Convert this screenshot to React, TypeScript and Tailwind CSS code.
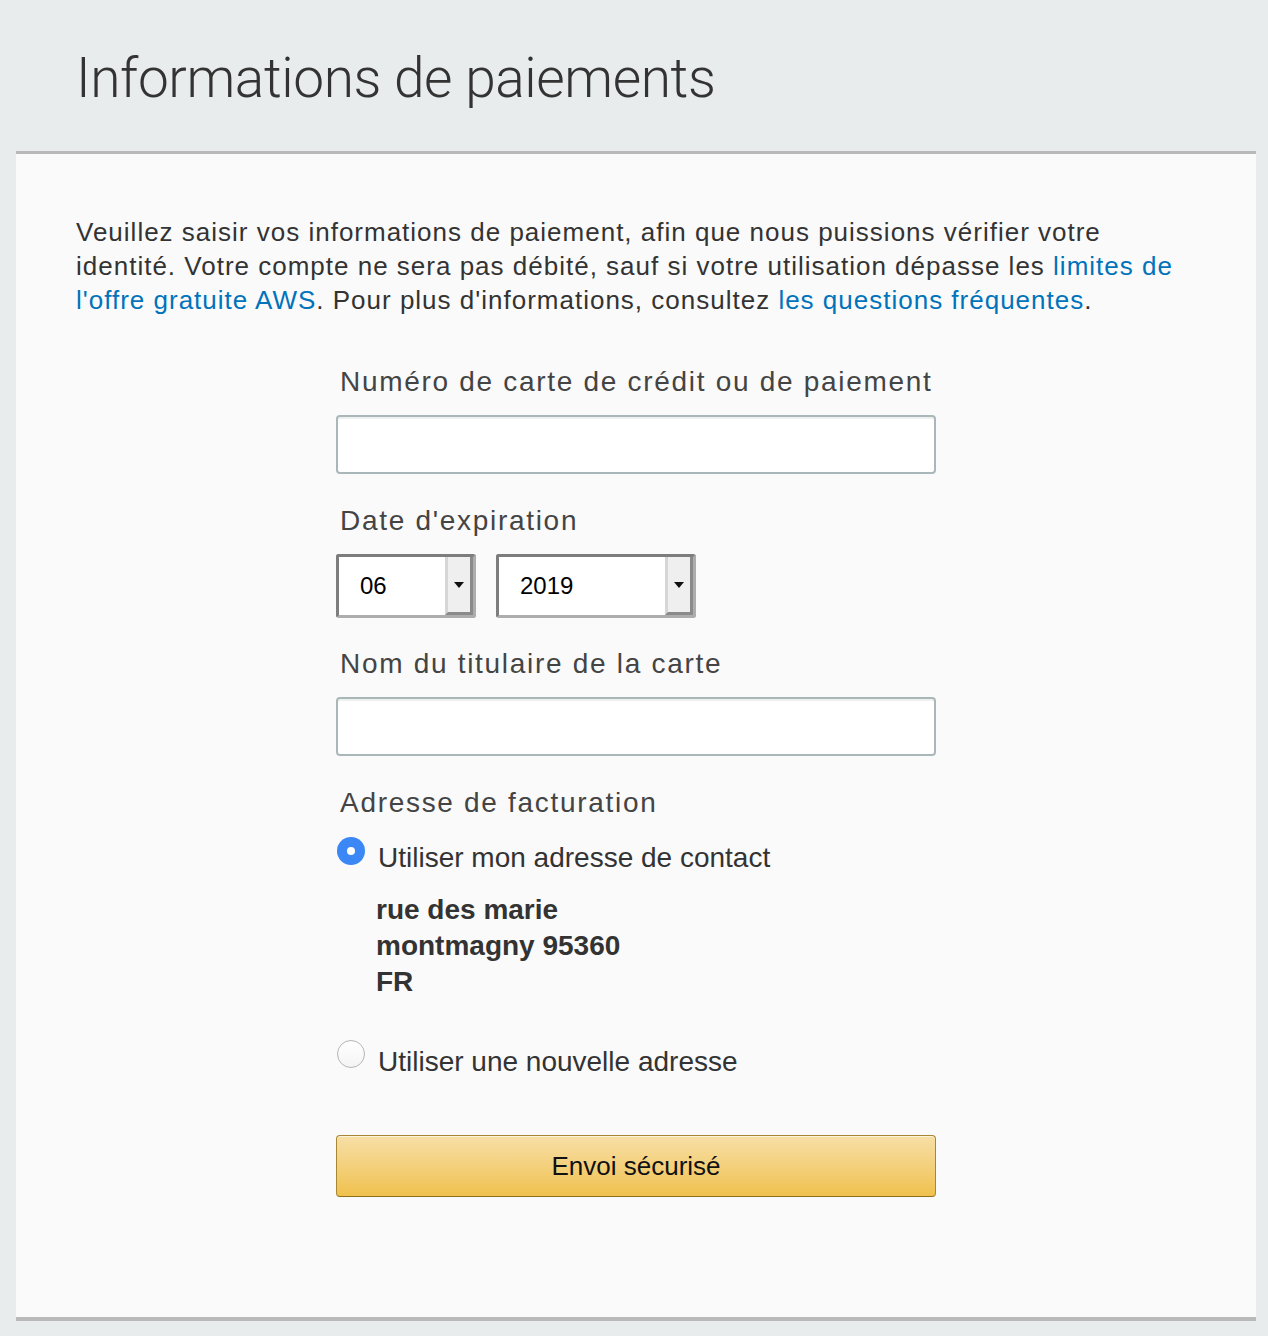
import { useState } from 'react';

const font = "font-['Liberation_Sans',Arial,Helvetica,sans-serif]";

function Select({ value, width }: { value: string; width: string }) {
  return (
    <div
      className={`flex h-[64px] ${width} overflow-hidden rounded-[3px] border-[3px] border-t-[#7d7d7d] border-l-[#7d7d7d] border-b-[#adadad] border-r-[#adadad] bg-white`}
    >
      <div className="flex flex-1 items-center pl-[21px] text-[24px] text-black">{value}</div>
      <div className="flex w-[28px] items-center justify-center border-l-[3px] border-b-[3px] border-r-[3px] border-l-[#d6d6d6] border-b-[#8a8a8a] border-r-[#8a8a8a] bg-[#efefef]">
        <svg width="10" height="6" viewBox="0 0 10 6">
          <path d="M0 0h10L5 6z" fill="#111" />
        </svg>
      </div>
    </div>
  );
}

function Radio({ checked }: { checked: boolean }) {
  if (checked) {
    return (
      <span className="ml-px flex h-[28px] w-[28px] shrink-0 items-center justify-center rounded-full bg-[#3b87f5]">
        <span className="h-[8px] w-[8px] rounded-full bg-white" />
      </span>
    );
  }
  return (
    <span className="ml-px h-[28px] w-[28px] shrink-0 rounded-full border border-[#b5b5b5] bg-gradient-to-b from-white to-[#f4f4f4]" />
  );
}

const labelCls = 'block pl-1 text-[28px] leading-[30px] tracking-[1.7px] text-[#444]';
const inputCls =
  'block h-[59px] w-full rounded-[4px] border-2 border-[#aab7b8] bg-white shadow-[inset_0_2px_0_#eef0f0] outline-none';

export default function App() {
  const [useContact, setUseContact] = useState(true);

  return (
    <div className={`min-h-screen bg-[#e9ecec] pb-4 ${font}`}>
      <div className="h-[151px] px-[76px] pt-[51px]">
        <h1 className="font-['Roboto',sans-serif] text-[55px] font-light leading-none tracking-[-0.4px] text-[#333]">
          Informations de paiements
        </h1>
      </div>

      <div className="ml-4 mr-3 border-t-[3px] border-b-[4px] border-[#b9b9b9] bg-[#fafafa] pt-[61px] pb-[120px]">
        <p className="ml-[60px] w-[1110px] text-[26px] leading-[34px] tracking-[1px] text-[#333]">
          Veuillez saisir vos informations de paiement, afin que nous puissions vérifier votre identité. Votre
          compte ne sera pas débité, sauf si votre utilisation dépasse les{' '}
          <a className="text-[#0073bb]">limites de l'offre gratuite AWS</a>. Pour plus d'informations, consultez{' '}
          <a className="text-[#0073bb]">les questions fréquentes</a>.
        </p>

        <form className="mx-auto mt-[50px] w-[600px]">
          <label className={labelCls}>Numéro de carte de crédit ou de paiement</label>
          <input className={`mt-[18px] ${inputCls}`} />

          <label className={`mt-[32px] ${labelCls}`}>Date d'expiration</label>
          <div className="mt-[18px] flex gap-5">
            <Select value="06" width="w-[140px]" />
            <Select value="2019" width="w-[200px]" />
          </div>

          <label className={`mt-[31px] ${labelCls}`}>Nom du titulaire de la carte</label>
          <input className={`mt-[18px] ${inputCls}`} />

          <label className={`mt-[32px] ${labelCls}`}>Adresse de facturation</label>

          <div className="mt-[19px] flex cursor-pointer items-start" onClick={() => setUseContact(true)}>
            <Radio checked={useContact} />
            <span className="mt-[4px] ml-[13px] text-[28px] leading-[34px] text-[#333]">
              Utiliser mon adresse de contact
            </span>
          </div>
          <div className="mt-[17px] ml-[40px] text-[28px] font-bold leading-[36px] text-[#333]">
            <div>rue des marie</div>
            <div>montmagny 95360</div>
            <div>FR</div>
          </div>

          <div className="mt-[40px] flex cursor-pointer items-start" onClick={() => setUseContact(false)}>
            <Radio checked={!useContact} />
            <span className="mt-[5px] ml-[13px] text-[28px] leading-[34px] text-[#333]">
              Utiliser une nouvelle adresse
            </span>
          </div>

          <button
            type="button"
            className="mt-[56px] flex h-[62px] w-full items-center justify-center rounded-[4px] border border-[#a88734] border-b-[#8d6e1d] bg-gradient-to-b from-[#f7dfa5] to-[#f0c14b] text-[26px] text-[#111] shadow-[inset_0_1px_0_rgba(255,255,255,0.6)]"
          >
            Envoi sécurisé
          </button>
        </form>
      </div>
    </div>
  );
}
